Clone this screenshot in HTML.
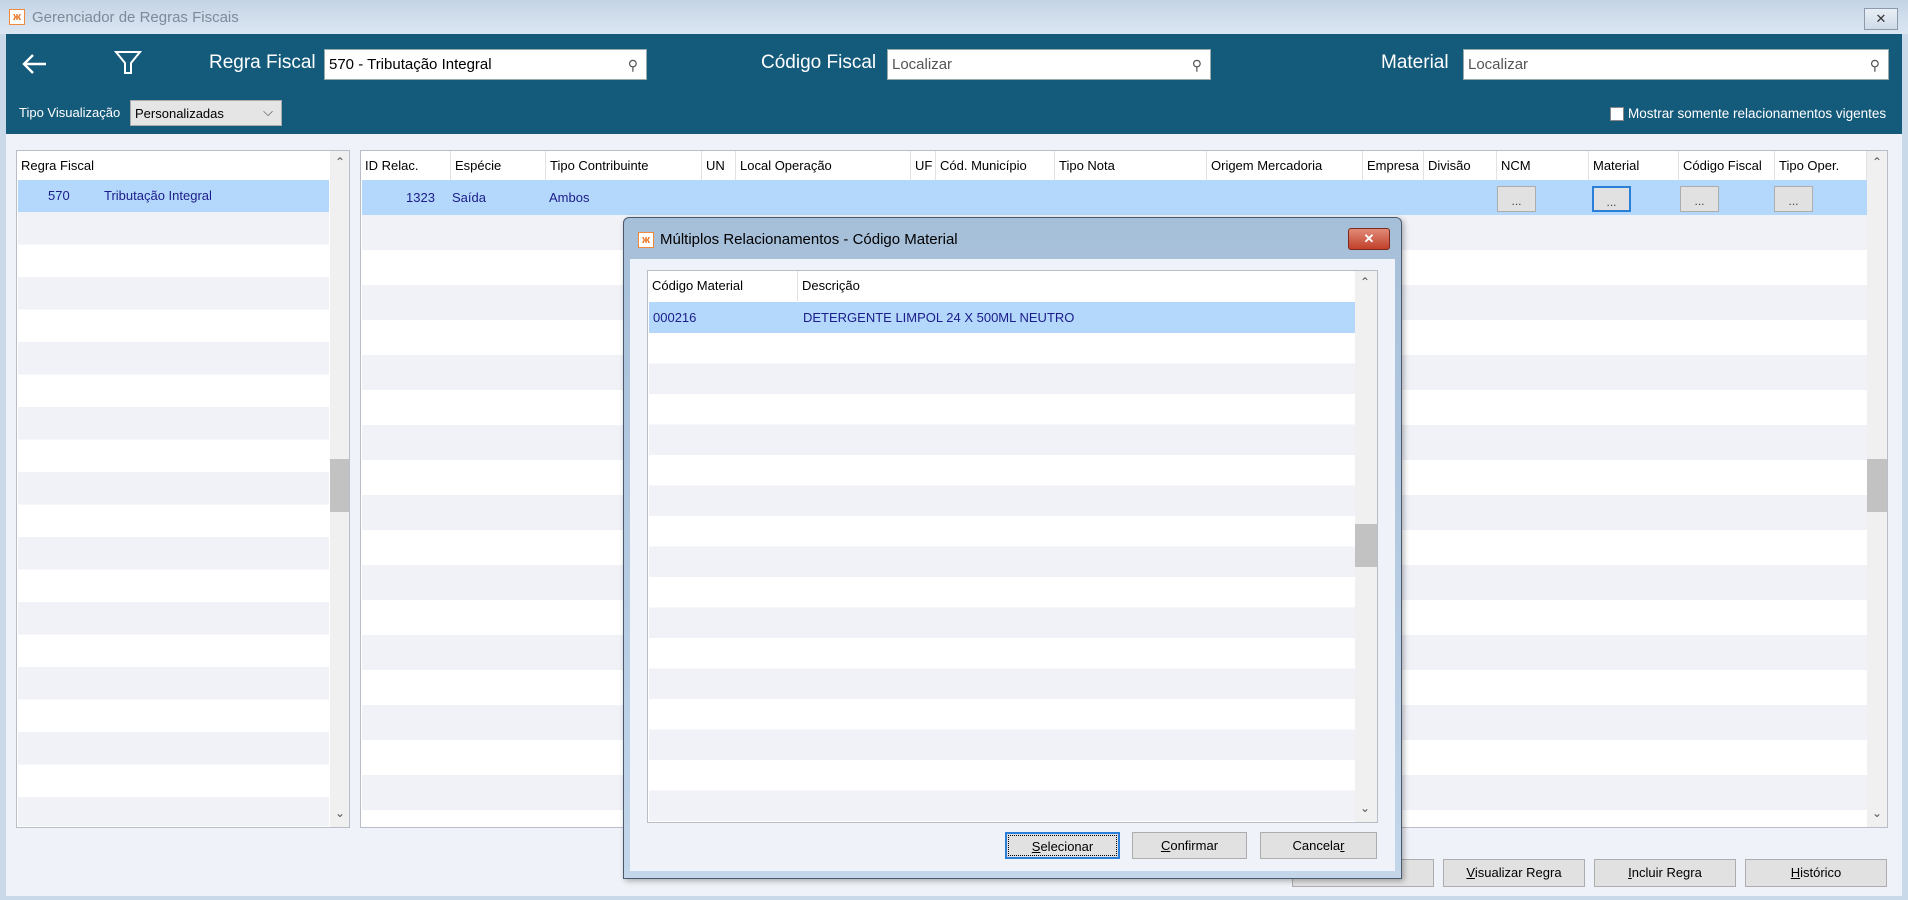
<!DOCTYPE html>
<html><head><meta charset="utf-8">
<style>
*{box-sizing:border-box;margin:0;padding:0}
body{width:1908px;height:900px;overflow:hidden;background:#c9d9ea;font-family:"Liberation Sans",sans-serif;font-size:13px;color:#000;position:relative}
.a{position:absolute}
.title{left:0;top:0;width:1908px;height:34px;background:linear-gradient(#c4d4e6,#dbe6f2)}
.win{left:6px;top:34px;width:1896px;height:862px;background:#eff2f8}
.hdr{left:6px;top:34px;width:1896px;height:100px;background:#145a7b}
.lbl{color:#fff;font-size:19px}
.inp{background:#fff;border:1px solid #9aa;height:31px;font-size:15px;padding:6px 4px;color:#000}
.inp .mg{position:absolute;right:8px;top:7px;font-size:14px;color:#555}
.panel{background:#fff;border:1px solid #b9bec6}
.th{position:absolute;top:0;height:30px;line-height:30px;font-size:13px;padding-left:4px;border-right:1px solid #e3e3e3;white-space:nowrap;overflow:hidden}
.sel{background:#b3d8fb}
.blue{color:#1c1c8a}
.btn{position:absolute;background:#e1e1e1;border:1px solid #adadad;text-align:center;font-size:13px;line-height:26px}
.dots{position:absolute;background:#e1e1e1;border:1px solid #adadad;width:39px;height:26px;text-align:center;font-size:12px;line-height:28px;color:#444}
.sb{position:absolute;background:#f0f0f0}
</style></head><body>
<div class="a title"></div>
<div class="a" style="left:9px;top:9px;width:16px;height:16px;background:#fff;border:1px solid #f08a3c;color:#e8701c;font-size:11px;line-height:14px;text-align:center;font-weight:bold">ж</div>
<div class="a" style="left:32px;top:9px;font-size:15px;color:#7d8a99">Gerenciador de Regras Fiscais</div>
<div class="a" style="left:1864px;top:8px;width:34px;height:22px;border:1px solid #8d9aab;background:linear-gradient(#e9eff6,#cfdbe8);text-align:center;font-size:13px;line-height:20px;color:#333">✕</div>
<div class="a win"></div>
<div class="a hdr"></div>
<svg class="a" style="left:20px;top:52px" width="30" height="24" viewBox="0 0 30 24"><path d="M26 12H4M13 3L4 12L13 21" fill="none" stroke="#fff" stroke-width="2.4"/></svg>
<svg class="a" style="left:114px;top:50px" width="28" height="26" viewBox="0 0 28 26"><path d="M2 2H26L17 13V23H11V13Z" fill="none" stroke="#fff" stroke-width="2"/></svg>
<div class="a lbl" style="left:209px;top:52px">Regra Fiscal</div>
<div class="a inp" style="left:324px;top:49px;width:323px">570 - Tributação Integral<span class="mg">⚲</span></div>
<div class="a lbl" style="left:761px;top:52px">Código Fiscal</div>
<div class="a inp" style="left:887px;top:49px;width:324px;color:#555">Localizar<span class="mg">⚲</span></div>
<div class="a lbl" style="left:1381px;top:52px">Material</div>
<div class="a inp" style="left:1463px;top:49px;width:426px;color:#555">Localizar<span class="mg">⚲</span></div>
<div class="a" style="left:19px;top:105px;color:#fff;font-size:13px">Tipo Visualização</div>
<div class="a" style="left:130px;top:100px;width:152px;height:26px;background:#e5e5e5;border:1px solid #aaa;font-size:13px;padding:5px 4px">Personalizadas<span style="position:absolute;right:8px;top:3px;color:#444">⌵</span></div>
<div class="a" style="left:1610px;top:107px;width:14px;height:14px;background:#fff;border:1px solid #888"></div>
<div class="a" style="left:1628px;top:106px;color:#fff;font-size:13.5px">Mostrar somente relacionamentos vigentes</div>

<!-- left panel -->
<div class="a panel" style="left:16px;top:150px;width:334px;height:678px;overflow:hidden">
 <div class="th" style="left:0;width:312px;border:none">Regra Fiscal</div>
 <div class="a" style="left:1px;top:29px;width:311px;height:646px;background:repeating-linear-gradient(#f0f2f8 0 32.5px,#fff 32.5px 65px);background-position:0 32px"></div>
 <div class="a sel blue" style="left:1px;top:29px;width:311px;height:32px;line-height:32px"><span style="position:absolute;left:30px">570</span><span style="position:absolute;left:86px">Tributação Integral</span></div>
 <div class="sb" style="left:313px;top:0;width:20px;height:678px"></div>
 <div class="a" style="left:313px;top:308px;width:20px;height:53px;background:#c2c2c2"></div>
 <div class="a" style="left:318px;top:4px;font-size:12px;color:#555">⌃</div>
 <div class="a" style="left:318px;top:655px;font-size:12px;color:#555">⌄</div>
</div>

<!-- right panel -->
<div class="a panel" style="left:360px;top:150px;width:1528px;height:678px;overflow:hidden">
 <div class="th" style="left:0;width:90px">ID Relac.</div>
 <div class="th" style="left:90px;width:95px">Espécie</div>
 <div class="th" style="left:185px;width:156px">Tipo Contribuinte</div>
 <div class="th" style="left:341px;width:34px">UN</div>
 <div class="th" style="left:375px;width:175px">Local Operação</div>
 <div class="th" style="left:550px;width:25px">UF</div>
 <div class="th" style="left:575px;width:119px">Cód. Município</div>
 <div class="th" style="left:694px;width:152px">Tipo Nota</div>
 <div class="th" style="left:846px;width:156px">Origem Mercadoria</div>
 <div class="th" style="left:1002px;width:61px">Empresa</div>
 <div class="th" style="left:1063px;width:73px">Divisão</div>
 <div class="th" style="left:1136px;width:92px">NCM</div>
 <div class="th" style="left:1228px;width:90px">Material</div>
 <div class="th" style="left:1318px;width:96px">Código Fiscal</div>
 <div class="th" style="left:1414px;width:92px">Tipo Oper.</div>
 <div class="a" style="left:1px;top:29px;width:1505px;height:646px;background:repeating-linear-gradient(#f0f2f8 0 35px,#fff 35px 70px);background-position:0 35px"></div>
 <div class="a sel blue" style="left:1px;top:29px;width:1505px;height:35px;line-height:35px"><span style="position:absolute;left:44px">1323</span><span style="position:absolute;left:90px">Saída</span><span style="position:absolute;left:187px">Ambos</span></div>
 <div class="dots" style="left:1136px;top:35px">...</div>
 <div class="dots" style="left:1231px;top:35px;border:2px solid #2b7fd6">...</div>
 <div class="dots" style="left:1319px;top:35px">...</div>
 <div class="dots" style="left:1413px;top:35px">...</div>
 <div class="sb" style="left:1506px;top:0;width:21px;height:678px"></div>
 <div class="a" style="left:1506px;top:308px;width:21px;height:53px;background:#c2c2c2"></div>
 <div class="a" style="left:1511px;top:4px;font-size:12px;color:#555">⌃</div>
 <div class="a" style="left:1511px;top:655px;font-size:12px;color:#555">⌄</div>
</div>

<div class="btn" style="left:1292px;top:859px;width:142px;height:28px"></div>
<div class="btn" style="left:1443px;top:859px;width:142px;height:28px"><u>V</u>isualizar Regra</div>
<div class="btn" style="left:1594px;top:859px;width:142px;height:28px"><u>I</u>ncluir Regra</div>
<div class="btn" style="left:1745px;top:859px;width:142px;height:28px"><u>H</u>istórico</div>

<!-- dialog -->
<div class="a" style="left:623px;top:217px;width:779px;height:662px;background:linear-gradient(#a6bfd9,#c3d6ea);border:1px solid #4a5a6c;border-radius:6px 6px 0 0;box-shadow:2px 2px 6px rgba(0,0,0,.3)"></div>
<div class="a" style="left:638px;top:232px;width:16px;height:16px;background:#fff;border:1px solid #f08a3c;color:#e8701c;font-size:11px;line-height:14px;text-align:center;font-weight:bold">ж</div>
<div class="a" style="left:660px;top:231px;font-size:15px;color:#000">Múltiplos Relacionamentos - Código Material</div>
<div class="a" style="left:1348px;top:228px;width:42px;height:22px;background:linear-gradient(#e08a78,#c2402a);border:1px solid #7a2a1c;border-radius:3px;color:#fff;text-align:center;font-size:13px;line-height:20px;font-weight:bold">✕</div>
<div class="a" style="left:630px;top:259px;width:765px;height:612px;background:#eff2f8"></div>
<div class="a panel" style="left:647px;top:270px;width:731px;height:553px;overflow:hidden">
 <div class="th" style="left:0;width:150px">Código Material</div>
 <div class="th" style="left:150px;width:557px;border:none">Descrição</div>
 <div class="a" style="left:1px;top:31px;width:706px;height:520px;background:repeating-linear-gradient(#fff 0 30.5px,#f0f2f8 30.5px 61px);background-position:0 31px"></div>
 <div class="a sel blue" style="left:1px;top:31px;width:706px;height:31px;line-height:31px"><span style="position:absolute;left:4px">000216</span><span style="position:absolute;left:154px">DETERGENTE LIMPOL 24 X 500ML NEUTRO</span></div>
 <div class="sb" style="left:707px;top:0;width:22px;height:553px"></div>
 <div class="a" style="left:707px;top:253px;width:22px;height:43px;background:#c2c2c2"></div>
 <div class="a" style="left:712px;top:4px;font-size:12px;color:#555">⌃</div>
 <div class="a" style="left:712px;top:530px;font-size:12px;color:#555">⌄</div>
</div>
<div class="btn" style="left:1005px;top:832px;width:115px;height:27px;border:2px solid #2b7fd6;outline:1px dotted #000;outline-offset:-4px"><u>S</u>elecionar</div>
<div class="btn" style="left:1132px;top:832px;width:115px;height:27px"><u>C</u>onfirmar</div>
<div class="btn" style="left:1260px;top:832px;width:117px;height:27px">Cancela<u>r</u></div>
</body></html>
